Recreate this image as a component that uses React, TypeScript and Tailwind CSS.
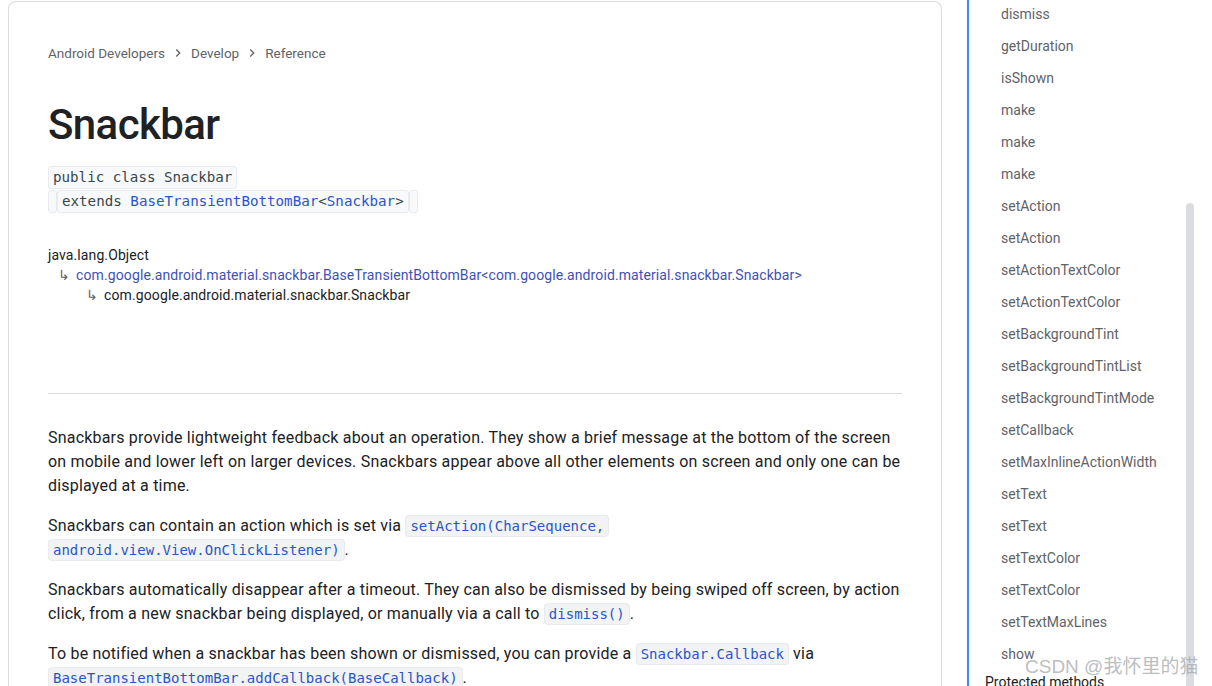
import React from 'react';

const sans = { fontFamily: 'Roboto, "Noto Sans", Arial, sans-serif' };

const methods = [
  'dismiss', 'getDuration', 'isShown', 'make', 'make', 'make', 'setAction', 'setAction',
  'setActionTextColor', 'setActionTextColor', 'setBackgroundTint', 'setBackgroundTintList',
  'setBackgroundTintMode', 'setCallback', 'setMaxInlineActionWidth', 'setText', 'setText',
  'setTextColor', 'setTextColor', 'setTextMaxLines', 'show',
];

const Chevron = () => (
  <svg width="14" height="14" viewBox="0 0 24 24" className="mx-[6px] text-[#5f6368]">
    <path d="M9 6l6 6-6 6" fill="none" stroke="currentColor" strokeWidth="2.2" />
  </svg>
);

const Code: React.FC<{ children: React.ReactNode }> = ({ children }) => (
  <code className="rounded-[4px] border border-[#e8eaed] bg-[#f1f3f4] px-[4px] py-[2px] font-['DejaVu_Sans_Mono','Liberation_Mono',monospace] text-[14px] leading-[16px] tracking-normal text-[#2a56c6] [box-decoration-break:clone]">
    {children}
  </code>
);

export default function App() {
  return (
    <div className="relative flex h-[686px] w-[1212px] overflow-hidden bg-white" style={sans}>
      {/* main card */}
      <div className="ml-2 mt-px w-[934px] shrink-0 rounded-t-lg border border-b-0 border-[#dadce0] px-[39px] pt-[41px]">
        <nav className="flex items-center text-[13.5px] leading-5 text-[#5f6368]">
          <span>Android Developers</span>
          <Chevron />
          <span>Develop</span>
          <Chevron />
          <span>Reference</span>
        </nav>

        <h1 className="mt-[34px] text-[42px] font-medium leading-[56px] tracking-[-0.6px] text-[#202124]">Snackbar</h1>

        <div className="mt-[13px] font-['DejaVu_Sans_Mono','Liberation_Mono',monospace] text-[14.2px] leading-[21px] text-[#37474f]">
          <div className="flex">
            <span className="rounded-[3px] border border-[#e8eaed] bg-[#f8f9fa] px-[4px]">public class Snackbar</span>
          </div>
          <div className="mt-px flex">
            <span className="w-[9px] rounded-[3px] border border-[#e8eaed] bg-[#f8f9fa]" />
            <span className="rounded-[3px] border border-[#e8eaed] bg-[#f8f9fa] px-[4px]">
              extends <span className="text-[#2a56c6]">BaseTransientBottomBar</span>&lt;<span className="text-[#2a56c6]">Snackbar</span>&gt;
            </span>
            <span className="w-[9px] rounded-[3px] border border-[#e8eaed] bg-[#f8f9fa]" />
          </div>
        </div>

        <div className="mt-[32px] text-[14px] leading-5 tracking-[0.1px] text-[#202124]">
          <div>java.lang.Object</div>
          <div className="pl-[10px]">
            <span className="mr-[6px] text-[#5f6368]">↳</span>
            <span className="text-[#3f51b5]">com.google.android.material.snackbar.BaseTransientBottomBar&lt;com.google.android.material.snackbar.Snackbar&gt;</span>
          </div>
          <div className="pl-[38px]">
            <span className="mr-[6px] text-[#5f6368]">↳</span>
            <span>com.google.android.material.snackbar.Snackbar</span>
          </div>
        </div>

        <hr className="mt-[88px] w-[854px] border-t border-[#dadce0]" />

        <div className="mt-[32px] w-[854px] text-[16px] leading-6 tracking-[0.2px] text-[#202124]">
          <p>
            Snackbars provide lightweight feedback about an operation. They show a brief message at the bottom of the screen on mobile and lower left on larger devices. Snackbars appear above all other elements on screen and only one can be displayed at a time.
          </p>
          <p className="mt-4">
            Snackbars can contain an action which is set via <Code>setAction(CharSequence,</Code>
            <br />
            <Code>android.view.View.OnClickListener)</Code>.
          </p>
          <p className="mt-4">
            Snackbars automatically disappear after a timeout. They can also be dismissed by being swiped off screen, by action click, from a new snackbar being displayed, or manually via a call to <Code>dismiss()</Code>.
          </p>
          <p className="mt-4">
            To be notified when a snackbar has been shown or dismissed, you can provide a <Code>Snackbar.Callback</Code> via{' '}
            <Code>BaseTransientBottomBar.addCallback(BaseCallback)</Code>.
          </p>
        </div>
      </div>

      {/* right nav */}
      <div className="ml-[25px] flex">
        <div className="w-[219px] border-l-2 border-[#4285f4]">
          <ul className="-mt-[2px] text-[14px] leading-8 text-[#5f6368]">
            {methods.map((m, i) => (
              <li key={i} className="pl-[32px]">{m}</li>
            ))}
          </ul>
          <div className="-mt-[4px] pl-[16px] text-[14px] leading-8 text-[#202124]">Protected methods</div>
        </div>
        <div className="mt-[203px] w-[8px] rounded-t-full bg-[#dadce0]" />
      </div>

      {/* watermark */}
      <div className="pointer-events-none absolute left-[1025px] top-[653px] text-[19px] text-[#a8acb0]/80" style={{ fontFamily: 'Arial, "Liberation Sans", "Noto Sans CJK SC", sans-serif' }}>
        CSDN @我怀里的猫
      </div>
    </div>
  );
}
